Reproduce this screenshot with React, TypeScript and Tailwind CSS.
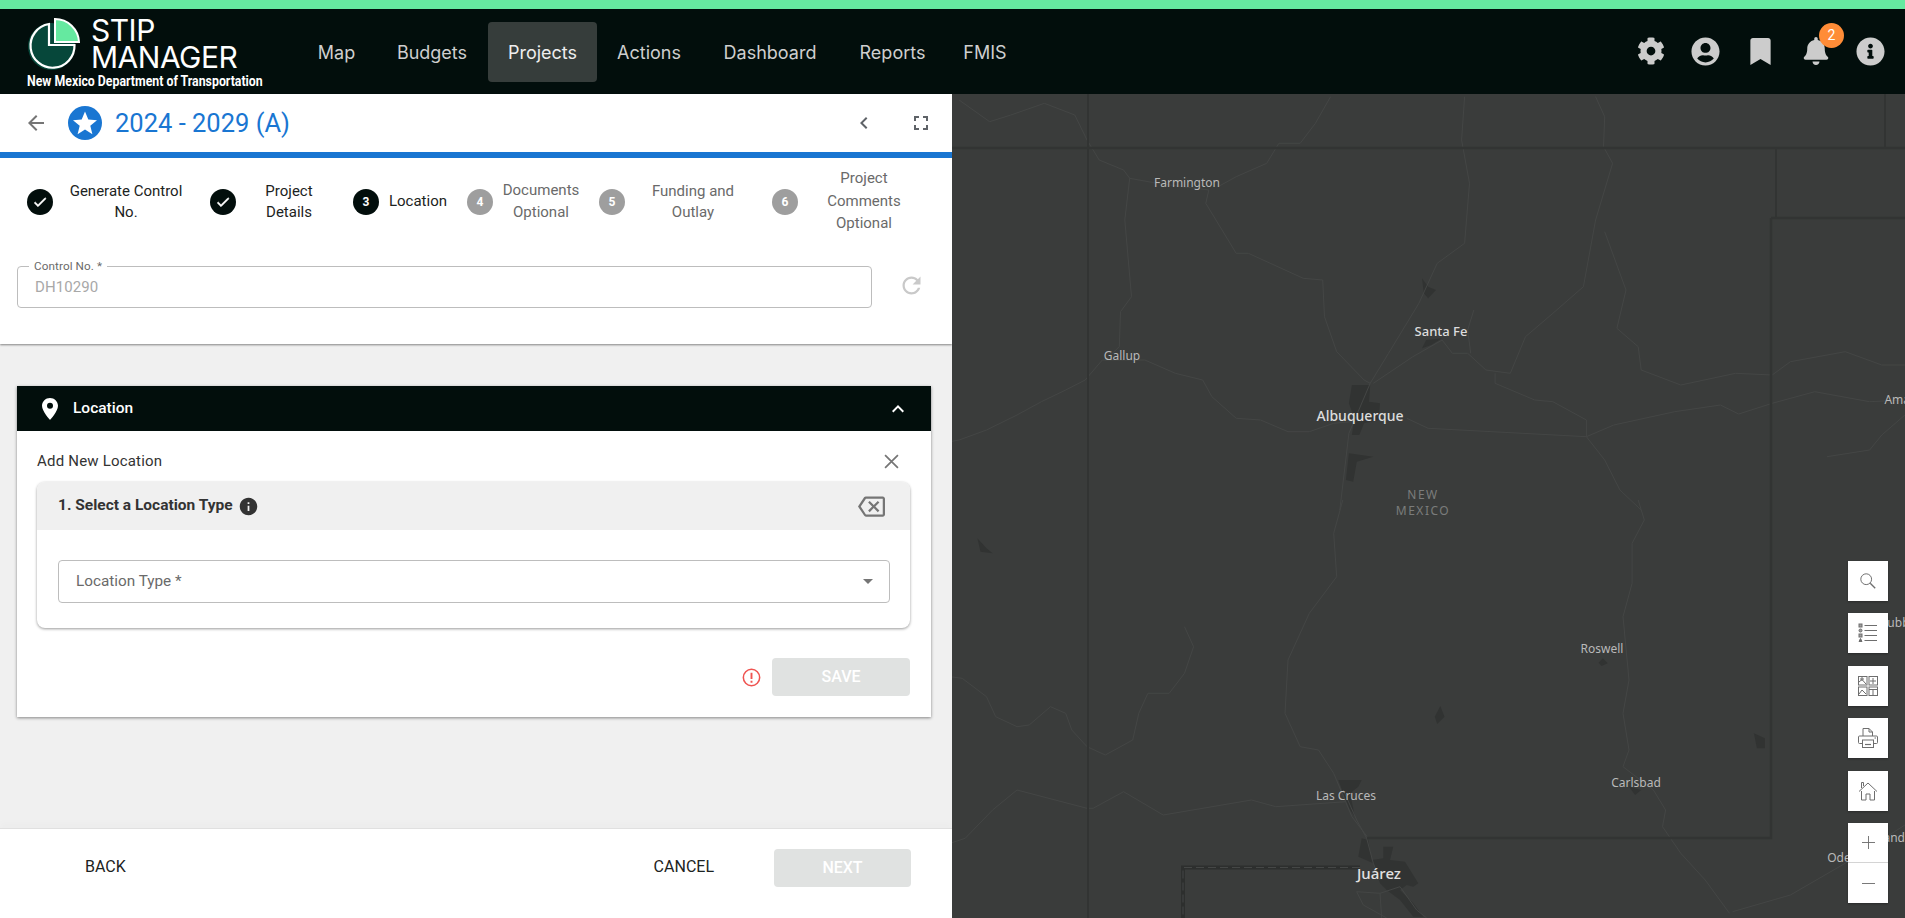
import { FaBell, FaBookmark, FaCog, FaInfoCircle, FaUserCircle } from 'react-icons/fa'

const navItems = [
	{ label: 'Map', width: 'w-[79px]' },
	{ label: 'Budgets', width: 'w-[112px]' },
	{ label: 'Projects', width: 'w-[109px]', active: true },
	{ label: 'Actions', width: 'w-[104px]' },
	{ label: 'Dashboard', width: 'w-[138px]' },
	{ label: 'Reports', width: 'w-[107px]' },
	{ label: 'FMIS', width: 'w-[78px]' },
]

const steps = [
	{ key: 1, done: true, active: true, lines: ['Generate Control', 'No.'], width: 'w-[183px]', label: 'w-[146px] leading-[21px]' },
	{ key: 2, done: true, active: true, lines: ['Project', 'Details'], width: 'w-[143px]', label: 'w-[106px] leading-[21px]' },
	{ key: 3, active: true, lines: ['Location'], width: 'w-[114px]', label: 'w-[78px] leading-[21px] mb-[2px]' },
	{ key: 4, lines: ['Documents', 'Optional'], width: 'w-[132px]', label: 'w-[96px] leading-[22.5px] mb-[2px]' },
	{ key: 5, lines: ['Funding and', 'Outlay'], width: 'w-[173px]', label: 'w-[136px] leading-[21px]' },
	{ key: 6, lines: ['Project', 'Comments', 'Optional'], width: 'w-[170px]', label: 'w-[132px] leading-[22.5px] mb-[2px]' },
]

// map drawing: points were read off the two map crops, so convert them to page px
const topPts = (p: number[]) => conv(p, 90)
const botPts = (p: number[]) => conv(p, 500)
function conv(p: number[], y0: number) {
	const out: string[] = []
	for (let i = 0; i < p.length; i += 2) {
		out.push(`${(950 + p[i] / 1.642).toFixed(1)},${(y0 + p[i + 1] / 3).toFixed(1)}`)
	}
	return out.join(' ')
}
// same idea for the close-up crop around Juarez
function cropPts(p: number[]) {
	const out: string[] = []
	for (let i = 0; i < p.length; i += 2) {
		out.push(`${(1300 + p[i] / 3).toFixed(1)},${(780 + p[i + 1] / 3).toFixed(1)}`)
	}
	return out.join(' ')
}

const topRoads = [
	[0, 1055, 15, 1050, 60, 1020, 110, 975, 150, 935, 190, 900, 222, 870, 250, 810, 320, 810, 370, 850, 415, 870, 430, 920, 470, 985, 510, 990, 555, 1025, 590, 1025, 630, 1000, 660, 995],
	[750, 985, 785, 1015, 1045, 1040, 1090, 1005, 1190, 965, 1265, 945, 1295, 972, 1350, 940, 1420, 905, 1510, 935, 1568, 930],
	[1075, 425, 1110, 600, 1095, 715, 1130, 770, 1135, 840, 1200, 885, 1290, 850, 1350, 855, 1380, 815, 1470, 785, 1530, 825, 1568, 825],
	[15, 30, 65, 95, 100, 75, 155, 40, 205, 75, 225, 150, 245, 210, 285, 240, 295, 265, 340, 280, 425, 300, 420, 340, 470, 490, 490, 490, 580, 565, 612, 570, 615, 680, 635, 785, 680, 870, 690, 880],
	[295, 265, 287, 390, 298, 620, 280, 665, 278, 770, 255, 810],
	[625, 20, 600, 100, 575, 160, 540, 160, 520, 220, 470, 260, 440, 290],
	[845, 20, 840, 150, 853, 280, 845, 460, 800, 520, 770, 640, 720, 790, 690, 880, 655, 1030, 640, 1260],
	[1060, 20, 1075, 80, 1073, 170, 1088, 220, 1060, 390, 1040, 590, 990, 670, 945, 740, 920, 850, 880, 840, 850, 790, 825, 790, 808, 750, 760, 800, 695, 880],
	[895, 850, 895, 880, 960, 930, 990, 935, 1045, 990, 1045, 1040, 1075, 1110, 1100, 1200, 1135, 1260],
	[860, 660, 850, 720, 855, 790],
	[1568, 975, 1530, 1035, 1510, 1080, 1440, 1100],
]

const botRoads = [
	[1130, 0, 1140, 60, 1120, 130, 1120, 250, 1105, 350, 1115, 540, 1105, 640, 1115, 750, 1105, 800, 1155, 870, 1175, 930, 1170, 980, 1200, 1060, 1240, 1140, 1280, 1240],
	[645, 0, 630, 100, 635, 230, 590, 340, 555, 480, 550, 640, 575, 740, 605, 750, 630, 820, 660, 950, 685, 1010],
	[385, 380, 400, 440, 385, 520, 360, 580, 325, 580, 310, 640, 300, 720, 255, 765, 225, 740, 200, 690, 190, 640, 165, 620, 130, 675, 110, 680, 75, 650, 60, 590, 20, 535, 0, 530],
	[0, 1030, 25, 1015, 70, 930, 110, 870, 225, 925, 235, 925, 285, 875, 350, 945, 495, 900, 535, 920, 650, 905],
	[1285, 1235, 1380, 1185, 1470, 1090, 1568, 975],
]

const cropRoads = [
	[170, 335, 240, 340, 300, 320, 350, 390, 380, 414],
	[170, 335, 190, 375, 260, 414],
	[240, 340, 245, 414],
	[130, 30, 170, 120, 200, 175, 220, 250, 240, 300],
]

const topBlobs = [
	[660, 885, 690, 885, 688, 935, 706, 940, 704, 990, 680, 1000, 672, 1035, 660, 1035, 664, 985, 655, 940],
	[775, 775, 782, 750, 808, 745, 790, 765],
	[775, 565, 785, 590, 798, 600, 785, 625, 778, 610],
	[655, 1090, 695, 1100, 668, 1115, 662, 1175, 650, 1170],
]

const botBlobs = [
	[45, 115, 60, 145, 70, 160, 50, 155],
	[805, 618, 812, 650, 800, 672, 796, 650],
	[1072, 475, 1080, 490, 1070, 498, 1065, 488],
	[1320, 700, 1338, 715, 1338, 745, 1325, 745],
	[1115, 860, 1135, 870, 1125, 885],
]

const cropBlobs = [
	[185, 175, 205, 180, 215, 240, 250, 235, 250, 200, 280, 200, 270, 240, 315, 245, 355, 310, 340, 320, 320, 315, 300, 330, 340, 370, 370, 410, 340, 410, 300, 360, 260, 330, 240, 310, 220, 250, 175, 230],
	[115, 0, 185, 0, 175, 20, 150, 40, 165, 110, 150, 90, 130, 40],
]

const mapLabels = [
	{ text: 'Farmington', x: 1187, y: 183, cls: 'text-[12px] text-[#b9b9b9]' },
	{ text: 'Gallup', x: 1122, y: 356, cls: 'text-[12px] text-[#b9b9b9]' },
	{ text: 'Santa Fe', x: 1441, y: 332, cls: 'text-[13px] font-medium text-[#dddddd]' },
	{ text: 'Albuquerque', x: 1360, y: 415, cls: 'text-[14px] font-medium text-[#dddddd]' },
	{ text: 'NEW', x: 1423, y: 495, cls: 'text-[12px] tracking-[1.5px] text-[#7b7c7b]' },
	{ text: 'MEXICO', x: 1423, y: 511, cls: 'text-[12px] tracking-[1.5px] text-[#7b7c7b]' },
	{ text: 'Roswell', x: 1602, y: 649, cls: 'text-[12px] text-[#b9b9b9]' },
	{ text: 'Carlsbad', x: 1636, y: 783, cls: 'text-[12px] text-[#b9b9b9]' },
	{ text: 'Las Cruces', x: 1346, y: 796, cls: 'text-[12px] text-[#b9b9b9]' },
	{ text: 'Juárez', x: 1379, y: 873, cls: 'text-[15px] font-medium text-[#e2e2e2]' },
	{ text: 'Amarillo', x: 1908, y: 400, cls: 'text-[12px] text-[#b9b9b9]' },
	{ text: 'Odessa', x: 1848, y: 858, cls: 'text-[12px] text-[#b9b9b9]' },
	{ text: 'Lubbock', x: 1905, y: 623, cls: 'text-[12px] text-[#b9b9b9]' },
	{ text: 'Midland', x: 1882, y: 838, cls: 'text-[12px] text-[#b9b9b9]' },
]

function Logo() {
	return (
		<svg viewBox="0 0 52 53" className="w-[52px] h-[53px] shrink-0">
			<circle cx="23.5" cy="29.5" r="23.5" fill="#06473a" />
			<path d="M21 7 A22 22 0 1 0 46.5 28 L21 28 Z" fill="#06473a" stroke="#ffffff" strokeWidth="2.2" />
			<path d="M27 2 A24 24 0 0 1 51 25 L27 25 Z" fill="#65e9a0" stroke="#ffffff" strokeWidth="2" />
		</svg>
	)
}

function Step({ step }: { step: (typeof steps)[number] }) {
	return (
		<div className={`flex items-center shrink-0 ${step.width}`}>
			<div
				className={`w-[26px] h-[26px] rounded-full flex items-center justify-center text-[12px] font-bold text-white shrink-0 ${
					step.active ? 'bg-[#020e0c]' : 'bg-[#9e9e9e]'
				}`}
			>
				{step.done ? (
					<svg viewBox="0 0 24 24" className="w-[16px] h-[16px]" fill="#ffffff">
						<path d="M9 16.17 4.83 12l-1.42 1.41L9 19 21 7l-1.41-1.41z" stroke="#ffffff" strokeWidth="1" />
					</svg>
				) : (
					step.key
				)}
			</div>
			<div className={`text-center text-[15px] ${step.label} ${step.active ? 'text-[#1c2322]' : 'text-[#6a6a6a]'}`}>
				{step.lines.map((line) => (
					<div key={line}>{line}</div>
				))}
			</div>
		</div>
	)
}

function MapButton({ children }: { children: React.ReactNode }) {
	return (
		<button className="w-[40px] h-[40px] bg-white flex items-center justify-center shadow-[0_1px_2px_rgba(0,0,0,0.3)]">
			{children}
		</button>
	)
}

function MapPanel() {
	return (
		<section className="flex-1 relative overflow-hidden bg-[#3a3c3b]">
			<svg viewBox="952 94 953 824" className="absolute inset-0 w-full h-full" fill="none">
				{topBlobs.map((p, i) => (
					<polygon key={i} points={topPts(p)} fill="#313332" />
				))}
				{botBlobs.map((p, i) => (
					<polygon key={i} points={botPts(p)} fill="#313332" />
				))}
				{cropBlobs.map((p, i) => (
					<polygon key={i} points={cropPts(p)} fill="#313332" />
				))}
				{topRoads.map((p, i) => (
					<polyline key={i} points={topPts(p)} stroke="#444645" strokeWidth="1" />
				))}
				{botRoads.map((p, i) => (
					<polyline key={i} points={botPts(p)} stroke="#444645" strokeWidth="1" />
				))}
				{cropRoads.map((p, i) => (
					<polyline key={i} points={cropPts(p)} stroke="#444645" strokeWidth="1" />
				))}
				<g stroke="#323433" strokeWidth="2">
					<path d="M1088 94V918" />
					<path d="M952 148H1905" strokeWidth="2.5" />
					<path d="M1885 94V148" />
					<path d="M1776 148V218" />
					<path d="M1771 218H1905" strokeWidth="2.5" />
					<path d="M1771 218V838H1367" strokeWidth="2.5" />
				</g>
				<path d="M1360 867.5H1183V918" stroke="#2d2f2e" strokeWidth="4" />
				<path d="M1360 867.5H1183V918" stroke="#454746" strokeWidth="1" strokeDasharray="8 4" />
			</svg>

			{mapLabels.map((l) => (
				<span
					key={l.text}
					className={`absolute -translate-x-1/2 -translate-y-1/2 whitespace-nowrap [font-family:'Noto_Sans',sans-serif] ${l.cls}`}
					style={{ left: l.x - 952, top: l.y - 94 }}
				>
					{l.text}
				</span>
			))}

			{/* map widgets sit over the map */}
			<div className="absolute right-[17px] bottom-[15px] flex flex-col gap-[12.5px]">
				<MapButton>
					<svg viewBox="0 0 20 20" className="w-[18px] h-[18px]" fill="none" stroke="#6e6e6e" strokeWidth="1.1">
						<circle cx="8" cy="8" r="6" />
						<path d="M12.5 12.5 18 18" strokeWidth="1.5" />
					</svg>
				</MapButton>
				<MapButton>
					<svg viewBox="0 0 20 20" className="w-[20px] h-[20px]" fill="none" stroke="#6e6e6e" strokeWidth="1">
						<path d="M6.5 2.5H19M6.5 7.5H19M6.5 12.5H19M6.5 17.5H19" />
						<rect x="1" y="1" width="3" height="3" fill="#a0a0a0" />
						<circle cx="2.5" cy="7.5" r="1.5" fill="#a0a0a0" />
						<rect x="1" y="11" width="3" height="3" fill="#a0a0a0" />
						<path d="M1 18.5h3L2.5 15.5z" fill="#6e6e6e" />
					</svg>
				</MapButton>
				<MapButton>
					<svg viewBox="0 0 20 20" className="w-[20px] h-[20px]" fill="none" stroke="#6e6e6e" strokeWidth="1">
						<rect x="0.5" y="0.5" width="8.5" height="8.5" />
						<rect x="11" y="0.5" width="8.5" height="8.5" />
						<rect x="0.5" y="11" width="8.5" height="8.5" />
						<rect x="11" y="11" width="8.5" height="8.5" />
						<path d="M1 6 4 3.5 8 8M3 2h2v2H3zM12 5h3V2M15 8V5h3M1 18l3-4 4 4M11 13.5h8M15 13.5V19" />
					</svg>
				</MapButton>
				<MapButton>
					<svg viewBox="0 0 20 20" className="w-[20px] h-[20px]" fill="none" stroke="#6e6e6e" strokeWidth="1">
						<path d="M5 8V0.5H11L14.5 4V8M11 0.5V4H14.5" />
						<rect x="0.5" y="8" width="19" height="7.5" rx="1" />
						<rect x="4.5" y="12" width="11" height="7.5" fill="#ffffff" />
						<path d="M7 16.5h6" strokeWidth="1.2" />
						<path d="M16.5 10h1.5" />
					</svg>
				</MapButton>
				<MapButton>
					<svg viewBox="0 0 20 20" className="w-[20px] h-[20px]" fill="none" stroke="#6e6e6e" strokeWidth="1">
						<path d="M3.5 10V19H8V13H12V19H16.5V10" />
						<path d="M1 10.5 10 2 19 10.5" />
						<path d="M3.5 7V1.5H5.5V5" />
					</svg>
				</MapButton>
				<div className="flex flex-col w-[40px] shadow-[0_1px_2px_rgba(0,0,0,0.3)]">
					<button className="h-[40px] bg-white flex items-center justify-center border-b border-[#d4d4d4]">
						<svg viewBox="0 0 14 14" className="w-[13px] h-[13px]" stroke="#6e6e6e" strokeWidth="1">
							<path d="M7 0V14M0 7H14" />
						</svg>
					</button>
					<button className="h-[40px] bg-white flex items-center justify-center">
						<svg viewBox="0 0 14 14" className="w-[13px] h-[13px]" stroke="#6e6e6e" strokeWidth="1">
							<path d="M0 7H14" />
						</svg>
					</button>
				</div>
			</div>
		</section>
	)
}

export default function App() {
	return (
		<div className="h-screen w-full flex flex-col overflow-hidden [font-family:Roboto,sans-serif]">
			<div className="h-[9px] bg-[#65e9a0] shrink-0" />

			{/* Top nav */}
			<header className="h-[85px] shrink-0 bg-[#020e0c] flex items-start">
				<div className="w-[297px] pl-[27px] pt-[8px] shrink-0">
					<div className="flex pl-[1px]">
						<Logo />
						<div className="ml-[11px] text-white text-[30px] leading-[27px] tracking-[-0.5px] [font-family:Inter,sans-serif]">
							<div>STIP</div>
							<div>MANAGER</div>
						</div>
					</div>
					<div className="mt-[3px] w-[270px] origin-left scale-x-[0.88] text-white text-[14px] leading-[14px] font-bold whitespace-nowrap">
						New Mexico Department of Transportation
					</div>
				</div>
				<nav className="flex mt-[13px] [font-family:Inter,sans-serif] text-[18px]">
					{navItems.map((item) => (
						<a
							key={item.label}
							className={`h-[60px] flex items-center justify-center rounded ${item.width} ${
								item.active ? 'bg-[#363d3b] text-[#eeeeee]' : 'text-[#cfcfcf]'
							}`}
						>
							{item.label}
						</a>
					))}
				</nav>
				<div className="ml-auto mr-[7px] mt-[13px] h-[58px] flex items-center text-[#cccccc]">
					<span className="w-[55px] flex justify-center">
						<FaCog className="w-[28px] h-[28px]" />
					</span>
					<span className="w-[55px] flex justify-center">
						<FaUserCircle className="w-[29px] h-[29px]" />
					</span>
					<span className="w-[55px] flex justify-center">
						<FaBookmark className="w-[27px] h-[27px]" />
					</span>
					<span className="w-[55px] flex justify-center relative">
						<FaBell className="w-[28px] h-[28px]" />
						<span className="absolute left-[31px] top-[-14px] w-[25px] h-[25px] rounded-full bg-[#ff8c37] text-white text-[14px] flex items-center justify-center">
							2
						</span>
					</span>
					<span className="w-[55px] flex justify-center">
						<FaInfoCircle className="w-[29px] h-[29px]" />
					</span>
				</div>
			</header>

			<div className="flex-1 flex min-h-0">
				{/* Left panel */}
				<main className="w-[952px] shrink-0 flex flex-col bg-[#f0f0f0]">
					<div className="bg-white shadow-[0_1px_2px_rgba(0,0,0,0.45)] relative">
						<div className="h-[64px] border-b-[6px] border-[#1976d2] flex items-center pl-[24px] pr-[19px]">
							<svg viewBox="0 0 24 24" className="w-[24px] h-[24px]" fill="#757575">
								<path d="M20 11H7.83l5.59-5.59L12 4l-8 8 8 8 1.41-1.41L7.83 13H20v-2z" />
							</svg>
							<svg viewBox="0 0 34 34" className="w-[34px] h-[34px] ml-[20px]">
								<circle cx="17" cy="17" r="17" fill="#1976d2" />
								<path d="M17 5.5l3.3 8.1 8.7.6-6.7 5.6 2.1 8.5L17 23.6l-7.4 4.7 2.1-8.5L5 14.2l8.7-.6z" fill="#ffffff" />
							</svg>
							<h1 className="ml-[13px] text-[25.5px] text-[#1976d2]">2024 - 2029 (A)</h1>
							<svg viewBox="0 0 24 24" className="w-[24px] h-[24px] ml-auto" fill="#5f6368">
								<path d="M15.41 7.41 14 6l-6 6 6 6 1.41-1.41L10.83 12z" />
							</svg>
							<svg viewBox="0 0 24 24" className="w-[24px] h-[24px] ml-[33px]" fill="#5f6368">
								<path d="M7 14H5v5h5v-2H7v-3zm-2-4h2V7h3V5H5v5zm12 7h-3v2h5v-5h-2v3zM14 5v2h3v3h2V5h-5z" />
							</svg>
						</div>

						<div className="h-[88px] flex items-center pl-[27px]">
							{steps.map((step) => (
								<Step key={step.key} step={step} />
							))}
						</div>

						<div className="flex items-start pl-[17px] pt-[20px] pb-[36px]">
							<div className="w-[855px] h-[42px] border border-[#bdbdbd] rounded relative flex items-center pl-[17px] text-[15px] tracking-[0.1px] text-[#a8a8a8]">
								<span className="absolute left-[11px] top-[-8px] px-[5px] bg-white text-[11.7px] leading-[14px] text-[#6a6a6a]">
									Control No. *
								</span>
								DH10290
							</div>
							<svg viewBox="0 0 24 24" className="w-[27px] h-[27px] ml-[26px] mt-[6px]" fill="#c9c9c9">
								<path d="M17.65 6.35C16.2 4.9 14.21 4 12 4c-4.42 0-7.99 3.58-7.99 8s3.57 8 7.99 8c3.73 0 6.84-2.55 7.73-6h-2.08c-.82 2.33-3.04 4-5.65 4-3.31 0-6-2.69-6-6s2.69-6 6-6c1.66 0 3.14.69 4.22 1.78L13 11h7V4l-2.35 2.35z" />
							</svg>
						</div>
					</div>

					<div className="flex-1 min-h-0 pt-[42px] pl-[17px] pr-[21px]">
						<div className="bg-white shadow-[0_1px_3px_rgba(0,0,0,0.45)]">
							<div className="h-[45px] bg-[#020e0c] flex items-center pl-[25px] pr-[21px] text-white">
								<svg viewBox="0 0 16 22" className="w-[16px] h-[22px]" fill="#ffffff">
									<path fillRule="evenodd" d="M8 0C3.6 0 0 3.5 0 7.8 0 13.3 8 22 8 22s8-8.7 8-14.2C16 3.5 12.4 0 8 0zm0 10.8a3 3 0 1 1 0-6 3 3 0 0 1 0 6z" />
								</svg>
								<span className="ml-[15px] text-[15.5px] font-medium">Location</span>
								<svg viewBox="0 0 24 24" className="w-[24px] h-[24px] ml-auto" fill="#ffffff">
									<path d="M7.41 15.41 12 10.83l4.59 4.58L18 14l-6-6-6 6z" />
								</svg>
							</div>

							<div className="pl-[20px] pr-[21px] pb-[21px]">
								<div className="h-[51px] pt-[9px] flex items-center justify-between">
									<span className="text-[15px] text-[#333333] tracking-[0.2px]">Add New Location</span>
									<svg viewBox="0 0 14 14" className="w-[15px] h-[15px] mr-[11px]" stroke="#757575" strokeWidth="1.6">
										<path d="M1 1 13 13M13 1 1 13" />
									</svg>
								</div>

								<div className="h-[146px] rounded-lg bg-white shadow-[0_1px_3px_rgba(0,0,0,0.4)] overflow-hidden">
									<div className="h-[48px] bg-[#f0f0f0] flex items-center pl-[21px] pr-[25px]">
										<span className="text-[15.5px] font-bold text-[#333333] -mt-[1px]">1. Select a Location Type</span>
										<svg viewBox="0 0 24 24" className="w-[21px] h-[21px] ml-[5px]" fill="#333333">
											<path d="M12 2C6.48 2 2 6.48 2 12s4.48 10 10 10 10-4.48 10-10S17.52 2 12 2zm1 15h-2v-6h2v6zm0-8h-2V7h2v2z" />
										</svg>
										<svg viewBox="0 0 24 24" className="w-[27px] h-[27px] ml-auto" fill="#757575">
											<path d="M22 3H7c-.69 0-1.23.35-1.59.88L0 12l5.41 8.11c.36.53.9.89 1.59.89h15c1.1 0 2-.9 2-2V5c0-1.1-.9-2-2-2zm0 16H7.07L2.4 12l4.66-7H22v14zm-11.59-2L14 13.41 17.59 17 19 15.59 15.41 12 19 8.41 17.59 7 14 10.59 10.41 7 9 8.41 12.59 12 9 15.59z" />
										</svg>
									</div>
									<div className="pt-[30px] pl-[21px] pr-[20px]">
										<div className="h-[43px] border border-[#bdbdbd] rounded flex items-center pl-[17px] pr-[16px] text-[15.3px] text-[#6a6a6a]">
											Location Type *
											<span className="ml-auto w-0 h-0 border-l-[5px] border-r-[5px] border-t-[5px] border-l-transparent border-r-transparent border-t-[#757575]" />
										</div>
									</div>
								</div>

								<div className="mt-[30px] flex items-center justify-end">
									<svg viewBox="0 0 20 20" className="w-[19px] h-[19px] mr-[11px]" fill="none" stroke="#ef5350" strokeWidth="1.6">
										<circle cx="10" cy="10" r="8.6" />
										<path d="M10 5v6.5M10 13.5v2" strokeWidth="2" />
									</svg>
									<button className="w-[138px] h-[38px] rounded bg-[#e0e2e1] text-white text-[16px] font-medium">SAVE</button>
								</div>
							</div>
						</div>
					</div>

					<footer className="h-[90px] shrink-0 bg-white border-t border-[#e0e0e0] shadow-[0_-6px_6px_rgba(0,0,0,0.015)] flex items-start pt-[20px] pl-[85px] pr-[41px] text-[16px] text-[#1c2322]">
						<span className="mt-[6px]">BACK</span>
						<span className="ml-auto mt-[6px]">CANCEL</span>
						<button className="ml-[60px] w-[137px] h-[38px] rounded bg-[#e0e2e1] text-white font-medium">NEXT</button>
					</footer>
				</main>

				<MapPanel />
			</div>
		</div>
	)
}
